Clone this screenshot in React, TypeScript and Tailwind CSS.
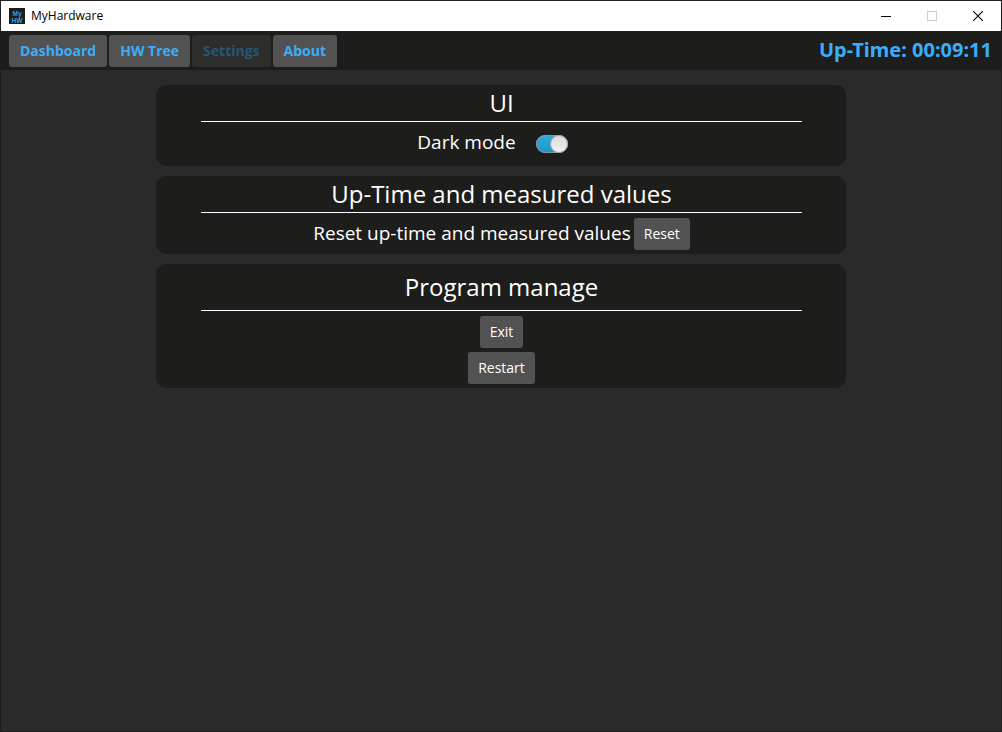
import { useState, type ReactNode } from "react";

function AppIcon() {
  return (
    <svg viewBox="0 0 16 16" className="size-4" aria-hidden="true">
      <rect width="16" height="16" fill="#1d1d1b" />
      <g fill="#3b9fd6" fontFamily="Liberation Sans, sans-serif" fontWeight="700" textAnchor="middle">
        <text x="8" y="7.500" fontSize="6.500">My</text>
        <text x="8" y="14.500" fontSize="6.500">HW</text>
      </g>
    </svg>
  );
}

function TitleBar() {
  return (
    <div className="flex h-[30px] items-center bg-white pl-2 text-black">
      <AppIcon />
      <span className="ml-[6px] flex-1 text-[12px] leading-4">MyHardware</span>
      <button type="button" aria-label="Minimize" className="flex h-full w-[46px] items-center justify-center">
        <svg viewBox="0 0 10 10" className="size-[10px]" shapeRendering="crispEdges">
          <path d="M0 5.500h10" stroke="#000" />
        </svg>
      </button>
      <button type="button" aria-label="Maximize" disabled className="flex h-full w-[46px] items-center justify-center">
        <svg viewBox="0 0 10 10" className="size-[10px]" shapeRendering="crispEdges">
          <rect x=".5" y=".5" width="9" height="9" fill="none" stroke="#ccc" />
        </svg>
      </button>
      <button type="button" aria-label="Close" className="flex h-full w-[46px] items-center justify-center">
        <svg viewBox="0 0 10 10" className="size-[10px]">
          <path d="M0 0l10 10M10 0L0 10" stroke="#000" strokeWidth="1.100" />
        </svg>
      </button>
    </div>
  );
}

function NavButton({ children, disabled }: { children: ReactNode; disabled?: boolean }) {
  return (
    <button
      type="button"
      disabled={disabled}
      className="h-8 rounded-[3px] bg-[#525252] px-[11px] text-[14px] leading-5 font-bold text-[#3aaefa] disabled:bg-[#2d2d2c] disabled:text-[#265674]"
    >
      {children}
    </button>
  );
}

function ActionButton({ children }: { children: ReactNode }) {
  return (
    <button type="button" className="h-8 rounded-[3px] bg-[#525252] px-[10px] text-[14px] leading-5 text-white">
      {children}
    </button>
  );
}

function Card({ title, tall, children }: { title: string; tall?: boolean; children: ReactNode }) {
  return (
    <section className="rounded-[10px] bg-[#1d1d1b] pr-11 pl-[45px]">
      <h2
        className={
          tall
            ? "border-b border-white pt-[6px] pb-[6px] text-center text-[24px] leading-[34px]"
            : "border-b border-white pt-[1px] pb-[1px] text-center text-[24px] leading-[34px]"
        }
      >
        {title}
      </h2>
      {children}
    </section>
  );
}

export default function App() {
  const [dark, setDark] = useState(true);
  return (
    <div className="flex min-h-screen flex-col border border-[#1f1f1f] bg-[#2a2a2a] font-['Open_Sans','Noto_Sans',sans-serif] text-white">
      <TitleBar />
      <header className="flex h-[39px] items-center justify-between bg-[#1d1d1b] pr-[9px] pl-2">
        <nav className="flex gap-[2px]">
          <NavButton>Dashboard</NavButton>
          <NavButton>HW Tree</NavButton>
          <NavButton disabled>Settings</NavButton>
          <NavButton>About</NavButton>
        </nav>
        <div className="pb-[2px] font-['Noto_Sans',sans-serif] text-[20px] leading-6 font-bold text-[#3aaefa]">
          Up-Time: 00:09:11
        </div>
      </header>
      <main className="mx-auto flex w-[69%] flex-col gap-[10px] pt-[15px]">
        <Card title="UI">
          <div className="flex h-11 items-center justify-center gap-5 pr-[18px] pb-1">
            <label htmlFor="dark" className="text-[19px] leading-6">
              Dark mode
            </label>
            <input
              id="dark"
              type="checkbox"
              role="switch"
              checked={dark}
              onChange={(e) => setDark(e.target.checked)}
              className="mt-1 flex h-[18px] w-8 appearance-none rounded-full bg-linear-to-b from-[#35acd9] to-[#1596c7] ring-1 ring-[#8f9496] ring-inset before:size-[18px] before:rounded-full before:border before:border-[#a8a8a8] before:bg-linear-to-b before:from-[#dadada] before:to-[#f0f0f0] before:content-[''] checked:before:ml-auto"
            />
          </div>
        </Card>
        <Card title="Up-Time and measured values">
          <div className="flex items-center justify-center gap-[3px] pt-[5px] pb-1">
            <span className="pb-[2px] text-[19px] leading-6">Reset up-time and measured values</span>
            <ActionButton>Reset</ActionButton>
          </div>
        </Card>
        <Card title="Program manage" tall>
          <div className="flex flex-col items-center gap-1 pt-[5px] pb-1">
            <ActionButton>Exit</ActionButton>
            <ActionButton>Restart</ActionButton>
          </div>
        </Card>
      </main>
    </div>
  );
}
